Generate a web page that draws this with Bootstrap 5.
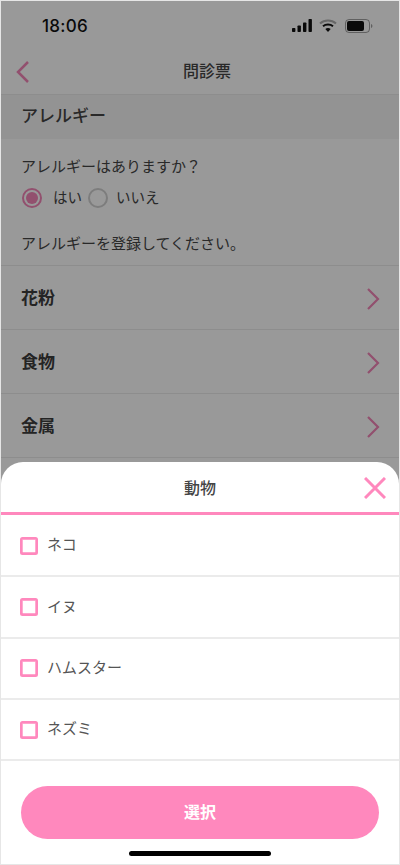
<!DOCTYPE html>
<html lang="ja">
<head>
<meta charset="utf-8">
<meta name="viewport" content="width=device-width, initial-scale=1">
<link href="https://cdn.jsdelivr.net/npm/bootstrap@5.3.0/dist/css/bootstrap.min.css" rel="stylesheet">
<style>
html,body{width:400px;height:865px;overflow:hidden;margin:0;background:#fff}
body{font-family:"Liberation Sans","Noto Sans CJK JP",sans-serif;color:#454545}
.phone{width:400px;height:865px;border:1px solid #e6e6e6;position:relative;overflow:hidden;background:#fff}
.status-row{height:46px;padding:5px 26px 0 41px}
.clock{font-family:Inter,"Liberation Sans",sans-serif;font-size:17px;font-weight:500;color:#111;letter-spacing:.3px}
.status-icons{margin-bottom:2px}
.signal-icon{margin-right:2px}
.top-bar{height:48px;border-bottom:1px solid #ececec;padding:2px 0 0 14px;position:relative}
.top-title{font-size:16px;font-weight:500;color:#454545;line-height:1}
.sheet-title{font-size:16px;font-weight:500;color:#454545;line-height:1;padding-top:3px}
.back-link{position:absolute;left:14px;top:12px;width:16px;height:24px}
.sec-head{height:44px;background:#f6f6f6;padding-left:20px;font-size:17px;font-weight:500;color:#454545}
.q-text{font-size:15px;line-height:20px;padding-left:20px}
.q1{padding-top:18px}
.radio-row{padding:11px 0 0 21px;height:42px;font-size:14.5px}
.radio-on{width:20px;height:20px;border-radius:50%;border:2px solid #f385b8;padding:2px;background:#fff;margin-right:11px}
.radio-on span{display:block;width:100%;height:100%;border-radius:50%;background:#f385b8}
.radio-off{width:20px;height:20px;border-radius:50%;border:2px solid #d0d0d0;margin:0 8px 0 6px}
.q2{padding-top:15px;height:46px}
.menu-row{height:64px;border-top:1px solid #ececec;padding:2px 19px 0 20px;font-size:17px;font-weight:700;color:#3c3c3c}
.dim{position:absolute;inset:0;background:rgba(0,0,0,.4)}
.sheet{position:absolute;left:0;right:0;top:461px;bottom:0;background:#fff;border-radius:22px 22px 0 0}
.sheet-head{height:53px;border-bottom:3px solid #ff88bd;position:relative}
.close-x{position:absolute;right:13px;top:15px;width:22px;height:22px}
.pick-list{padding-top:1px}
.pick-row{height:61.3px;border-bottom:2px solid #ebebeb;padding-left:19px;font-size:15px;color:#555}
.pick-box{width:18px;height:18px;border:2px solid #ff88bd;box-shadow:inset 0 0 0 .7px #ff88bd;border-radius:2.5px;margin-right:9px}
.pick-btn{width:358px;height:53px;margin:25px 0 0 20px;background:#ff88bd;border:0;border-radius:27px;color:#fff;font-size:16px;font-weight:700}
.home-bar{position:absolute;left:128px;top:850px;width:142px;height:5px;background:#000;border-radius:3px}
</style>
</head>
<body>
<div class="phone">
  <div class="d-flex align-items-center justify-content-between status-row">
    <span class="clock">18:06</span>
    <span class="d-flex align-items-center gap-1 status-icons">
      <svg class="signal-icon" width="21" height="13" viewBox="0 0 21 13"><rect x="0" y="9" width="3.4" height="4" rx=".8" fill="#111"/><rect x="5.5" y="6.5" width="3.4" height="6.5" rx=".8" fill="#111"/><rect x="11" y="3.5" width="3.4" height="9.5" rx=".8" fill="#111"/><rect x="16.5" y="0" width="3.4" height="13" rx=".8" fill="#111"/></svg>
      <svg width="18" height="13" viewBox="0 0 18 13"><path d="M1 4.500C5.500.5 12.500.5 17 4.500" fill="none" stroke="#111" stroke-width="2" opacity=".35"/><path d="M4 7.300C6.800 5 11.200 5 14 7.300" fill="none" stroke="#111" stroke-width="2"/><path d="M9 13 6.300 9.900C7.900 8.700 10.100 8.700 11.700 9.900Z" fill="#111"/></svg>
      <svg width="28" height="14" viewBox="0 0 28 14" class="ms-1"><rect x=".5" y=".5" width="24" height="13" rx="3.500" fill="none" stroke="#111" opacity=".4"/><rect x="2" y="2" width="17" height="10" rx="2" fill="#111"/><path d="M26 5v4c.8-.3 1.400-1.100 1.400-2S26.800 5.300 26 5z" fill="#111" opacity=".4"/></svg>
    </span>
  </div>
  <div class="d-flex align-items-center justify-content-center top-bar">
    <a class="back-link" href="#" aria-label="戻る"><svg width="16" height="24" viewBox="0 0 16 24"><path d="M13 2 3 12l10 10" fill="none" stroke="#f385b8" stroke-width="2.500"/></svg></a>
    <span class="top-title">問診票</span>
  </div>
  <div class="d-flex align-items-center sec-head">アレルギー</div>
  <div class="q-text q1">アレルギーはありますか？</div>
  <div class="d-flex align-items-start radio-row">
    <span class="radio-on"><span></span></span><span>はい</span>
    <span class="radio-off"></span><span>いいえ</span>
  </div>
  <div class="q-text q2">アレルギーを登録してください。</div>
  <div class="d-flex align-items-center justify-content-between menu-row">花粉<svg width="14" height="22" viewBox="0 0 14 22"><path d="M2 1l10 10L2 21" fill="none" stroke="#f385b8" stroke-width="2.200"/></svg></div>
  <div class="d-flex align-items-center justify-content-between menu-row">食物<svg width="14" height="22" viewBox="0 0 14 22"><path d="M2 1l10 10L2 21" fill="none" stroke="#f385b8" stroke-width="2.200"/></svg></div>
  <div class="d-flex align-items-center justify-content-between menu-row">金属<svg width="14" height="22" viewBox="0 0 14 22"><path d="M2 1l10 10L2 21" fill="none" stroke="#f385b8" stroke-width="2.200"/></svg></div>
  <div class="menu-row"></div>
  <div class="dim"></div>
  <div class="sheet">
    <div class="d-flex align-items-center justify-content-center sheet-head">
      <span class="sheet-title">動物</span>
      <svg class="close-x" viewBox="0 0 22 22"><path d="M1 1l20 20M21 1 1 21" fill="none" stroke="#ff88bd" stroke-width="3"/></svg>
    </div>
    <div class="pick-list">
      <div class="d-flex align-items-center pick-row"><span class="pick-box"></span>ネコ</div>
      <div class="d-flex align-items-center pick-row"><span class="pick-box"></span>イヌ</div>
      <div class="d-flex align-items-center pick-row"><span class="pick-box"></span>ハムスター</div>
      <div class="d-flex align-items-center pick-row"><span class="pick-box"></span>ネズミ</div>
    </div>
    <button type="button" class="btn pick-btn">選択</button>
  </div>
  <div class="home-bar"></div>
</div>
<script src="https://cdn.jsdelivr.net/npm/bootstrap@5.3.0/dist/js/bootstrap.bundle.min.js"></script>
</body>
</html>
